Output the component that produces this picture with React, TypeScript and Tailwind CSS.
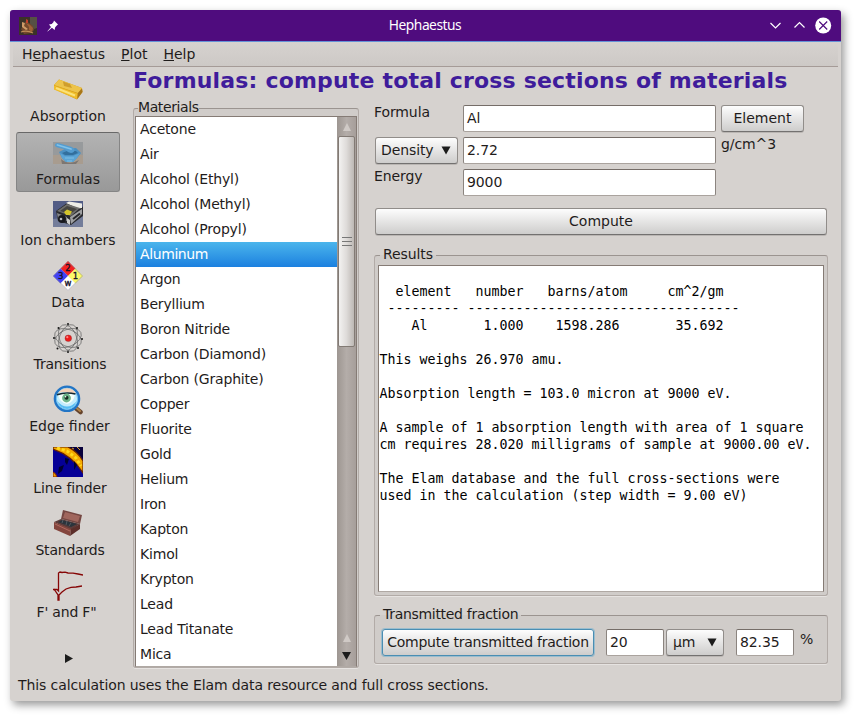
import React from 'react';

const UI = 'font-["DejaVu_Sans","Liberation_Sans",sans-serif]';

const materials = [
  'Acetone', 'Air', 'Alcohol (Ethyl)', 'Alcohol (Methyl)', 'Alcohol (Propyl)', 'Aluminum', 'Argon',
  'Beryllium', 'Boron Nitride', 'Carbon (Diamond)', 'Carbon (Graphite)', 'Copper', 'Fluorite', 'Gold',
  'Helium', 'Iron', 'Kapton', 'Kimol', 'Krypton', 'Lead', 'Lead Titanate', 'Mica',
];

const results = `
  element   number   barns/atom     cm^2/gm
 --------- ----------------------------------
    Al       1.000    1598.286       35.692

This weighs 26.970 amu.

Absorption length = 103.0 micron at 9000 eV.

A sample of 1 absorption length with area of 1 square
cm requires 28.020 milligrams of sample at 9000.00 eV.

The Elam database and the full cross-sections were
used in the calculation (step width = 9.00 eV)`;

const svg = { width: 30, height: 30, viewBox: '0 0 30 30' };

function AppIcon() {
  return (
    <svg width="18" height="18" viewBox="0 0 18 18">
      <rect width="18" height="18" fill="#3b3228" />
      <path d="M11 0h7v11l-3 1-4-5z" fill="#565044" />
      <path d="M2 12L5 8L7 4L10 6L14 9L15 13L12 16L5 17Z" fill="#75482c" />
      <path d="M7 6L11 8L14 11L13 15L10 13L10 10Z" fill="#a06238" />
      <path d="M7 2L9 3L9 6L7 6Z" fill="#c2402c" />
      <path d="M3 5L6 6L5 9L9 12L7 13L3 10Z" fill="#cf9b68" />
      <path d="M2 15Q8 13 14 16" stroke="#bd8c58" strokeWidth="1.2" fill="none" />
    </svg>
  );
}

function GoldIcon() {
  return (
    <svg {...svg}>
      <path d="M1 10L6 4.5L29 13L29.5 17L24 24.5L1 14Z" fill="#d39b18" />
      <path d="M1 10L6 4.5L29 13L25 18Z" fill="#edc44b" />
      <path d="M10 6.5L17 9L19 13L11 11Z" fill="#cf9d2c" />
      <path d="M1 10.5L24.5 18.5L24 24L1 14.5Z" fill="#f0bd2a" />
      <path d="M3 13L22 20.5" stroke="#fbe27a" strokeWidth="2" />
      <path d="M25 18L29 13.5L29.5 17L24.3 24Z" fill="#a8761a" />
    </svg>
  );
}

function MortarIcon() {
  return (
    <svg {...svg}>
      <rect y="4" width="30" height="22" fill="#979a9c" />
      <path d="M0 17H30V26H0Z" fill="#a89c8f" />
      <path d="M8 21Q16 28 26 22L23 26H9Z" fill="#7d7773" />
      <path d="M6 14L12 11L23 10L28 15L24 20L20 24H13L9 20Z" fill="#4b90c2" />
      <path d="M9 15L14 13L23 13L25 15L20 17L12 17Z" fill="#326f9d" />
      <path d="M7 15L12 18L20 18L27 15L24 20L20 24H13L9 20Z" fill="#5ba4d5" />
      <path d="M12 20L21 20M14 23H19" stroke="#7fbfe6" />
      <path d="M3 5.2Q.5 8 4 9.2L12 11.5Q16 16 20 14.5Q23.5 12 19 9L6 5.2Z" fill="#539cd0" />
      <path d="M4.5 7L18 11" stroke="#80c2ea" strokeWidth="1.8" strokeLinecap="round" />
    </svg>
  );
}

function ChamberIcon() {
  return (
    <svg {...svg}>
      <rect y="2" width="30" height="26" fill="#525c85" />
      <path d="M0 20L30 16V28H0Z" fill="#747d9a" />
      <path d="M3 12L14 4L30 8V17L18 26L5 22Z" fill="#2a2b2f" />
      <path d="M13 4L16 2.5L29 4.5V9L25 9.5Z" fill="#eeede7" />
      <path d="M4 12L14 5L27 9L18 17Z" fill="#6f6e6c" />
      <path d="M7 12L14 7L24 10L17 15Z" fill="#454440" />
      <path d="M11 13L14 10.5L19 12.5L17 16L13 16Z" fill="#d2c42b" />
      <path d="M17 18L29 10V15L18 25Z" fill="#9fa0a2" />
      <path d="M20 20L27 14.5" stroke="#26262a" strokeWidth="2" />
      <path d="M4 14L14 18V22L5 20Z" fill="#85878b" />
      <circle cx="9" cy="20" r="4" fill="#17181d" />
      <circle cx="8" cy="20" r="1.3" fill="#b8b9bd" />
      <path d="M14 19L17 21V26L14 24Z" fill="#cfcfcd" />
    </svg>
  );
}

function DiamondIcon() {
  return (
    <svg {...svg} className='font-["DejaVu_Sans",sans-serif] text-[8.5px]'>
      <path d="M15 0L22.5 7.5L15 15L7.5 7.5Z" fill="#f32222" />
      <path d="M7.5 7.5L15 15L7.5 22.5L0 15Z" fill="#4141f5" />
      <path d="M22.5 7.5L30 15L22.5 22.5L15 15Z" fill="#fafa69" />
      <path d="M15 15L22.5 22.5L15 30L7.5 22.5Z" fill="#fff" />
      <path d="M15 .5L29.5 15L15 29.5L.5 15Z" fill="none" stroke="#8c8798" strokeWidth=".6" />
      <g fill="#16122a" stroke="#16122a" strokeWidth=".35" textAnchor="middle">
        <text x="15" y="10.2">2</text><text x="7.7" y="17.8">3</text>
        <text x="22.3" y="17.8">1</text><text x="15" y="25">w</text>
      </g>
    </svg>
  );
}

function AtomIcon() {
  return (
    <svg {...svg}>
      <g fill="none" stroke="#666" strokeWidth=".7">
        {[22, 67, 112, 157].map((a) => (
          <ellipse key={a} cx="15" cy="15" rx="14" ry="8.5" transform={`rotate(${a} 15 15)`} />
        ))}
      </g>
      {[[15, 1], [24, 5], [29, 16], [25, 25], [15, 29], [4.5, 25.5], [1, 15], [5.5, 5]].map(([x, y]) => (
        <circle key={`${x}-${y}`} cx={x} cy={y} r="1" fill="#151515" />
      ))}
      <circle cx="15.3" cy="15.3" r="3.3" fill="#ef1b1b" stroke="#7e3030" strokeWidth=".4" />
      <circle cx="14.3" cy="14.2" r="1.1" fill="#ff8585" />
    </svg>
  );
}

function EyeIcon() {
  return (
    <svg {...svg}>
      <path d="M22 22.5L27.5 27" stroke="#66432b" strokeWidth="4.5" strokeLinecap="round" />
      <path d="M23 22.5L27 26" stroke="#b08348" strokeWidth="2" strokeLinecap="round" />
      <circle cx="14" cy="13.8" r="12" fill="#c4ecfc" stroke="#2375c5" strokeWidth="2.6" />
      <circle cx="14" cy="13.8" r="10.6" fill="none" stroke="#6ec3f3" />
      <path d="M5 8A11 11 0 0 1 23 8L19 8Q12 6 5 8Z" fill="#f3d3ba" />
      <path d="M4 16Q14 27 24 16L21 21Q14 27 7 21Z" fill="#58bdf3" />
      <path d="M5 10Q13 7 22 10Q20 18 14 19Q7 18 5 10Z" fill="#f4fffa" />
      <path d="M4 9.8Q13 6.5 22.5 9" stroke="#15272e" strokeWidth="1.5" fill="none" />
      <circle cx="13.5" cy="13" r="4.4" fill="#6cb388" />
      <circle cx="13.5" cy="12.8" r="2" fill="#142d21" />
      <circle cx="12.6" cy="11.8" r=".8" fill="#fff" />
    </svg>
  );
}

function LineIcon() {
  return (
    <svg {...svg}>
      <rect width="30" height="30" fill="#050096" />
      <path d="M16 0H30V12L25 7Z" fill="#08003c" />
      <path d="M0 0H15Q25 5 30 14V26Q20 9 0 2Z" fill="#f5a900" stroke="#6b2400" strokeWidth="1.2" />
      <path d="M4 1L14 4L23 11L28 19" stroke="#ffd91c" strokeWidth="3" strokeDasharray="3 2" fill="none" />
      <path d="M12 11L16 12L14 18L12 15ZM6 20L11 18L9 24L5 27ZM21 14L24 18L21 23Z" fill="#000032" />
      <path d="M0 25Q3 26 4 30H0Z" fill="#eaa000" stroke="#8b2700" />
      <path d="M24 0L27 3M19 1L21 2" stroke="#d6a32e" />
    </svg>
  );
}

function BoxIcon() {
  return (
    <svg {...svg}>
      <path d="M10 1L29 6L27 15L8 10Z" fill="#754742" />
      <path d="M12 3L27 7L25 13L10 9Z" fill="#a0665d" />
      <path d="M1 13L8 10L27 15L18 21Z" fill="#5c3c3a" />
      <path d="M5 13L9 11L24 15L18 18Z" fill="#2b343c" />
      <path d="M1 13L18 20L17 27L1 20Z" fill="#84453d" />
      <path d="M2 15L17 22" stroke="#b06a5f" />
      <path d="M18 20L27 15V20L17 27Z" fill="#5c2e2a" />
      <path d="M10 11L9 14M14 12L13 16M18 14L16 17" stroke="#555b62" />
    </svg>
  );
}

function CurveIcon() {
  return (
    <svg {...svg} fill="none" stroke="#860606" strokeWidth="1.3">
      <path d="M0 18.5H4L5.5 20V2L7 1L9 1.5L12 1.2L15 2L20 2.2L25 3L30 4" />
      <path d="M1 18L5 24V29L6 29V24L9 21L13 18L18 16.3L23 16L29 15" />
    </svg>
  );
}

const tools = [
  { label: 'Absorption', icon: <GoldIcon /> },
  { label: 'Formulas', icon: <MortarIcon />, active: true },
  { label: 'Ion chambers', icon: <ChamberIcon /> },
  { label: 'Data', icon: <DiamondIcon /> },
  { label: 'Transitions', icon: <AtomIcon />, nudge: 'pl-[4px] tracking-[-0.2px]' },
  { label: 'Edge finder', icon: <EyeIcon />, nudge: 'pl-[3px] tracking-normal' },
  { label: 'Line finder', icon: <LineIcon />, nudge: 'pl-[4px]' },
  { label: 'Standards', icon: <BoxIcon />, nudge: 'pl-[4px] tracking-[-0.2px]' },
  { label: 'F\' and F"', icon: <CurveIcon />, nudge: 'pr-[3px] tracking-[-0.2px]' },
];

const button =
  'flex h-[27px] items-center rounded-[3px] border border-[#918d8a] border-b-[#737170] bg-linear-to-b from-[#fdfdfd] to-[#cecdcc] shadow-[0_1px_0_#bab6b3]';

function Field({ value, className }: { value: string; className: string }) {
  return (
    <div className={`h-[27px] rounded-[2px] border border-[#8b847f] border-t-[#756d68] border-b-[#aaa39e] bg-white pl-[3px] leading-[25px] ${className}`}>
      {value}
    </div>
  );
}

function Down() {
  return <svg width="10" height="9" viewBox="0 0 10 9"><path d="M.5 .5H9.5L5 8.5Z" fill="#1c1c1c" /></svg>;
}

function Group({ title, className, children }: { title: string; className: string; children: React.ReactNode }) {
  return (
    <fieldset className={`min-w-0 rounded-[3px] border border-[#b2aba7] border-t-[#9b9490] bg-[#d0ccc9] shadow-[0_1px_0_#e6e3e1] ${className}`}>
      <legend className="h-[17px] whitespace-nowrap leading-[15px]">{title}</legend>
      {children}
    </fieldset>
  );
}

export default function App() {
  return (
    <div className={`h-[716px] w-[857px] overflow-hidden bg-white p-[10px] text-[14px] tracking-[-0.1px] text-[#1f1c1b] ${UI}`}>
      <div className="flex h-[691px] w-[831px] flex-col overflow-hidden rounded-[3px] bg-[#d6d2cf] shadow-[3px_4px_8px_0px_#999]">
        <header className="flex h-8 shrink-0 items-center border-b border-[#6492d8] bg-[#4f0c7e] pl-[9px] text-white">
          <AppIcon />
          <svg className="ml-[10px]" width="12" height="12" viewBox="0 0 12 12">
            <path d="M7 .5L11 4.5L9.8 5.5L8.2 7.3L7.6 10L4.9 7.8L.6 11.4L.4 11.2L4 6.9L2 4.6L4.7 4.1L6.4 2.3Z" fill="#fff" />
          </svg>
          <div className='flex-1 pl-[23px] text-center font-["Noto_Sans",sans-serif] text-[13.8px] tracking-[-0.5px]'>Hephaestus</div>
          <svg width="66" height="18" viewBox="0 0 66 18" className="mr-[7px]" fill="none" stroke="#fff" strokeWidth="1.2">
            <path d="M2.5 6L7.5 11L12.5 6M26.5 10.5L31.5 5.5L36.5 10.5" />
            <circle cx="55.2" cy="8.5" r="8" fill="#fff" stroke="none" />
            <path d="M51.2 4.5L59.2 12.5M59.2 4.5L51.2 12.5" stroke="#4f0c7e" />
          </svg>
        </header>

        <nav className="mx-[3px] flex h-[25px] shrink-0 gap-4 border-b border-[#a59b97] bg-linear-to-b from-[#d6d2cf] to-[#cdc9c6] pl-[9px] tracking-normal leading-[25px]">
          <span>H<u>e</u>phaestus</span>
          <span><u>P</u>lot</span>
          <span><u>H</u>elp</span>
        </nav>

        <div className="flex h-[602px] shrink-0">
          <aside className="flex w-[123px] shrink-0 flex-col pt-[2px]">
            {tools.map((t) => (
              <div key={t.label} className={t.active ? 'h-[62px] pt-px' : 'h-[62px]'}>
                <div
                  className={`ml-[6px] flex h-[60px] w-[104px] flex-col items-center rounded-[3px] border pt-[5px] ${
                    t.active
                      ? 'border-[#858585] border-t-[#686868] bg-linear-to-b from-[#b3b3b3] to-[#999]'
                      : 'border-transparent'
                  }`}
                >
                  {t.icon}
                  <span className={`mt-[2px] whitespace-nowrap leading-[18px] ${t.nudge ?? 'tracking-normal'}`}>{t.label}</span>
                </div>
              </div>
            ))}
            <svg className="mt-[27px] ml-[55px]" width="8" height="9" viewBox="0 0 8 9"><path d="M0 0L8 4.5L0 9Z" fill="#1c1c1c" /></svg>
          </aside>

          <main className="min-w-0 flex-1">
            <h1 className="h-[33px] whitespace-nowrap text-[22px] leading-[27px] font-bold tracking-[0.18px] text-[#3f1c9b]">
              Formulas: compute total cross sections of materials
            </h1>
            <div className="flex">
              <Group title="Materials" className="h-[568px] w-[226px] px-px [&>legend]:ml-[3px] [&>legend]:tracking-[-0.4px]">
                <div className="-mt-px flex h-[551px] border border-[#857b75] border-b-[#b0a9a4] bg-white">
                  <ul className="min-w-0 flex-1 tracking-[-0.19px]">
                    {materials.map((m) => (
                      <li
                        key={m}
                        className={`h-[25px] pl-1 leading-[25px] ${
                          m === 'Aluminum' ? 'bg-linear-to-b from-[#4bb5ec] to-[#1b80df] tracking-[-0.4px] text-white' : ''
                        }`}
                      >
                        {m}
                      </li>
                    ))}
                  </ul>
                  <div className="flex w-[19px] flex-col items-center bg-linear-to-r from-[#9d9691] via-[#b4ada9] to-[#a69e9a]">
                    <svg className="mt-[6px]" width="8" height="8" viewBox="0 0 8 8"><path d="M0 8L4 0L8 8Z" fill="#d0cac6" /></svg>
                    <div className="mt-[5px] flex h-[211px] w-[17px] flex-col items-center justify-center gap-[3px] rounded-[2px] border border-[#827a74] bg-linear-to-r from-[#f3f2f1] via-[#dedbd9] to-[#bdb8b4]">
                      <i className="h-px w-[10px] bg-[#777]" />
                      <i className="h-px w-[10px] bg-[#777]" />
                      <i className="h-px w-[10px] bg-[#777]" />
                    </div>
                    <svg className="mt-[287px]" width="8" height="8" viewBox="0 0 8 8"><path d="M0 8L4 0L8 8Z" fill="#d0cac6" /></svg>
                    <svg className="mt-[10px]" width="9" height="8" viewBox="0 0 9 8"><path d="M0 0H9L4.5 8Z" fill="#1c1c1c" /></svg>
                  </div>
                </div>
              </Group>

              <section className="ml-[15px] w-[454px] pt-[5px]">
                <div className="grid grid-cols-[84px_253px_84px] gap-x-[5px]">
                  <span className="h-8 leading-[14px]">Formula</span>
                  <Field value="Al" className="w-[253px]" />
                  <div className={`${button} w-[83px] justify-center tracking-normal`}>Element</div>
                  <div className={`${button} ml-px w-[83px] justify-between pr-[6px] pl-[5px]`}>Density <Down /></div>
                  <Field value="2.72" className="w-[253px]" />
                  <span className="h-8 leading-[14px]">g/cm^3</span>
                  <span className="h-8 leading-[14px]">Energy</span>
                  <Field value="9000" className="w-[253px]" />
                </div>
                <div className={`${button} mt-[7px] ml-px w-[452px] justify-center tracking-normal`}>Compute</div>
                <Group title="Results" className="mt-[12px] h-[349px] px-[3px] [&>legend]:ml-[2px] [&>legend]:px-[3px]">
                  <pre className='mt-px h-[327px] overflow-hidden border border-[#857b75] border-b-[#b0a9a4] bg-white pl-[0.5px] font-["DejaVu_Sans_Mono","Liberation_Mono",monospace] text-[13.3px] leading-[17px] tracking-[-0.007px] text-black'>
                    {'\u00a0' + results}
                  </pre>
                </Group>
                <Group title="Transmitted fraction" className="mt-[11px] h-[57px] px-[7px] [&>legend]:ml-[-2px] [&>legend]:px-[3px] [&>legend]:tracking-[-0.3px]">
                  <div className="mt-[5px] flex">
                    <div className={`${button} w-[212px] justify-center whitespace-nowrap !border-[#4a8eb3] tracking-[-0.25px] ring-1 ring-[#9abdce]`}>
                      Compute transmitted fraction
                    </div>
                    <Field value="20" className="ml-[12px] w-[58px]" />
                    <div className={`${button} ml-[2px] w-[58px] justify-between px-[6px]`}>µm <Down /></div>
                    <Field value="82.35" className="ml-[12px] w-[58px]" />
                    <span className="ml-[6px] leading-[20px]">%</span>
                  </div>
                </Group>
              </section>
            </div>
          </main>
        </div>
        <footer className="pl-2 leading-[33px]">This calculation uses the Elam data resource and full cross sections.</footer>
      </div>
    </div>
  );
}
